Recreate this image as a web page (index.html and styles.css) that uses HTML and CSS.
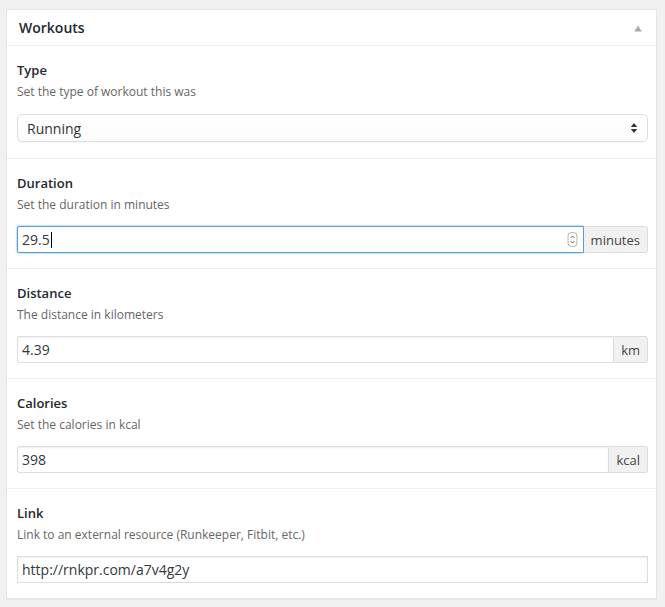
FILE: index.html
```html
<!DOCTYPE html>
<html lang="en">
<head>
<meta charset="utf-8">
<title>Workouts</title>
<link rel="stylesheet" href="styles.css">
</head>
<body>
<div class="postbox">
  <div class="postbox-header">
    <h2 class="postbox-title">Workouts</h2>
    <svg class="toggle" width="8" height="7" viewBox="0 0 8 7"><path d="M4 0.5 L7.8 6.5 L0.2 6.5 Z" fill="#aaa"/></svg>
  </div>

  <div class="field-row first">
    <div class="field-label">Type</div>
    <div class="field-desc">Set the type of workout this was</div>
    <div class="select-box">
      <select class="select-native">
        <option>Running</option>
      </select>
      <svg class="select-arrows" width="8" height="12" viewBox="0 0 8 12"><path d="M4 1 L7.2 5 L0.8 5 Z M0.8 7 L7.2 7 L4 11 Z" fill="#333"/></svg>
    </div>
  </div>

  <div class="field-row">
    <div class="field-label">Duration</div>
    <div class="field-desc">Set the duration in minutes</div>
    <div class="input-group">
      <div class="fake-input focused">
        <span class="value">29.5</span><span class="caret"></span>
        <svg class="spinner" width="11" height="15" viewBox="0 0 11 15"><rect x="1" y="0.5" width="9" height="14" rx="3.5" fill="#fff" stroke="#b4b4b4"/><path d="M3.6 6 L5.5 4 L7.4 6" fill="none" stroke="#666" stroke-width="1"/><path d="M3.6 9 L5.5 11 L7.4 9" fill="none" stroke="#666" stroke-width="1"/></svg>
      </div>
      <span class="addon">minutes</span>
    </div>
  </div>

  <div class="field-row">
    <div class="field-label">Distance</div>
    <div class="field-desc">The distance in kilometers</div>
    <div class="input-group">
      <input class="text-input grouped" type="text" value="4.39">
      <span class="addon">km</span>
    </div>
  </div>

  <div class="field-row">
    <div class="field-label">Calories</div>
    <div class="field-desc">Set the calories in kcal</div>
    <div class="input-group">
      <input class="text-input grouped" type="text" value="398">
      <span class="addon">kcal</span>
    </div>
  </div>

  <div class="field-row last">
    <div class="field-label">Link</div>
    <div class="field-desc">Link to an external resource (Runkeeper, Fitbit, etc.)</div>
    <input class="text-input full" type="text" value="http://rnkpr.com/a7v4g2y">
  </div>
</div>
</body>
</html>
```

FILE: styles.css
```css
* { box-sizing: border-box; }

html, body {
  margin: 0;
  padding: 0;
  background: #f1f1f1;
}

body {
  padding: 9px 8px 8px 6px;
  font-family: "Open Sans", "Liberation Sans", sans-serif;
  font-size: 13px;
  color: #444;
}

.postbox {
  background: #fff;
  border: 1px solid #e5e5e5;
  box-shadow: 0 1px 1px rgba(0, 0, 0, 0.04);
}

.postbox-header {
  display: flex;
  align-items: center;
  justify-content: space-between;
  height: 36px;
  padding: 0 14px 0 12px;
  border-bottom: 1px solid #eee;
}

.postbox-title {
  margin: 0;
  font-size: 14px;
  font-weight: 600;
  line-height: 20px;
  color: #23282d;
}

.toggle {
  display: block;
  margin-top: 1px;
}

.field-row {
  padding: 14px 8px 15px 10px;
  border-top: 1px solid #eee;
}

.field-row.first {
  border-top: 0;
  padding-top: 14px;
  padding-bottom: 16px;
}

.field-label {
  font-weight: 600;
  font-size: 13px;
  line-height: 20px;
  color: #23282d;
}

.field-desc {
  margin-top: 2px;
  font-size: 12px;
  line-height: 20px;
  color: #666;
}

.select-box {
  display: flex;
  align-items: center;
  margin-top: 12px;
  height: 28px;
  border: 1px solid #ddd;
  border-radius: 5px;
  background: linear-gradient(#fff, #fcfcfc);
  box-shadow: 0 1px 1px rgba(0, 0, 0, 0.03);
}

.select-native {
  flex: 1;
  appearance: none;
  -webkit-appearance: none;
  border: 0;
  background: transparent;
  font-family: "Open Sans", "Liberation Sans", sans-serif;
  font-size: 14px;
  color: #333;
  padding: 0 0 0 9px;
  height: 26px;
  outline: none;
}

.select-arrows {
  display: block;
  margin-right: 9px;
}

.input-group {
  display: flex;
  margin-top: 11px;
  height: 27px;
}

.text-input {
  display: block;
  height: 27px;
  margin: 0;
  border: 1px solid #ddd;
  box-shadow: inset 0 1px 2px rgba(0, 0, 0, 0.07);
  background: #fff;
  font-family: "Open Sans", "Liberation Sans", sans-serif;
  font-size: 14px;
  color: #32373c;
  padding: 0 4px;
  outline: none;
}

.text-input.grouped {
  flex: 1;
  min-width: 0;
  border-radius: 2px 0 0 2px;
}

.text-input.full {
  width: 100%;
  margin-top: 11px;
  border-radius: 0;
}

.fake-input {
  flex: 1;
  display: flex;
  align-items: center;
  height: 27px;
  padding: 0 5px 0 4px;
  border: 1px solid #5b9dd9;
  border-radius: 2px 0 0 2px;
  box-shadow: 0 0 2px rgba(30, 140, 190, 0.8);
  background: #fff;
  font-size: 14px;
  color: #32373c;
}

.fake-input .value {
  line-height: 20px;
}

.caret {
  display: inline-block;
  width: 1px;
  height: 16px;
  margin-left: 1px;
  background: #000;
}

.spinner {
  display: block;
  margin-left: auto;
}

.addon {
  display: flex;
  align-items: center;
  padding: 0 7px;
  background: #f1f1f1;
  border: 1px solid #ddd;
  border-left: 0;
  border-radius: 0 3px 3px 0;
  font-size: 13px;
  color: #444;
}
```
